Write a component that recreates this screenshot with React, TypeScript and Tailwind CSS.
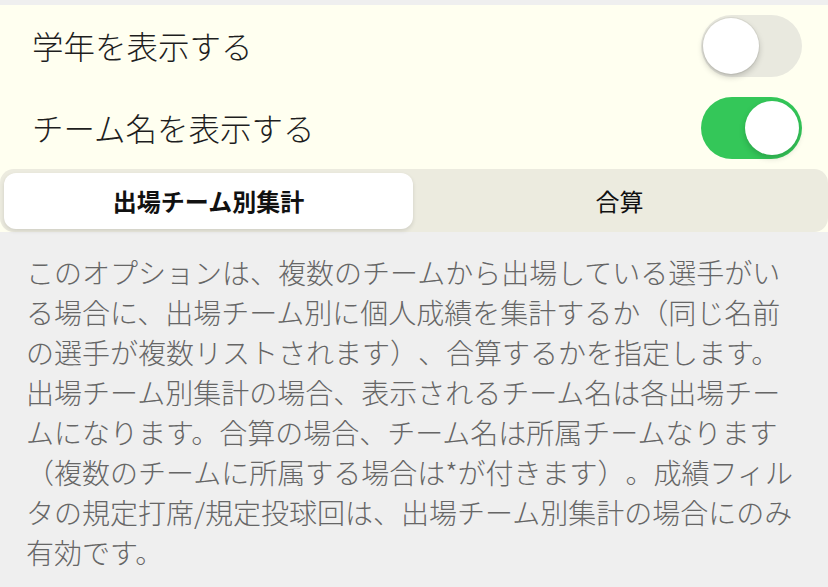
import React from "react";

const font = "font-['Noto_Sans_CJK_JP','Noto_Sans',sans-serif]";

function Toggle({ on }: { on: boolean }) {
  return on ? (
    <div className="relative h-[62px] w-[101px] rounded-full bg-[#34c759]">
      <div className="absolute right-[3px] top-[4px] h-[54px] w-[54px] rounded-full bg-white shadow-[0_3px_6px_rgba(0,0,0,0.18)]" />
    </div>
  ) : (
    <div className="relative h-[62px] w-[101px] rounded-full bg-[#e9e9df]">
      <div className="absolute left-[2px] top-[3px] h-[56px] w-[56px] rounded-full bg-white shadow-[0_3px_6px_rgba(0,0,0,0.2),0_0_0_1px_rgba(0,0,0,0.05)]" />
    </div>
  );
}

function Row({ label, on }: { label: string; on: boolean }) {
  return (
    <div className="flex h-[82px] items-center justify-between pl-8 pr-[26px]">
      <span className="text-[31.5px] font-light leading-none text-[#1e1e1e]">{label}</span>
      <Toggle on={on} />
    </div>
  );
}

const lines = [
  "このオプションは、複数のチームから出場している選手がい",
  "る場合に、出場チーム別に個人成績を集計するか（同じ名前",
  "の選手が複数リストされます）、合算するかを指定します。",
  "出場チーム別集計の場合、表示されるチーム名は各出場チー",
  "ムになります。合算の場合、チーム名は所属チームなります",
  "（複数のチームに所属する場合は*が付きます）。成績フィル",
  "タの規定打席/規定投球回は、出場チーム別集計の場合にのみ",
  "有効です。",
];

export default function App() {
  return (
    <div className={`${font} h-[587px] w-[828px] overflow-hidden bg-[#efefef] [text-spacing-trim:space-all]`}>
      <div className="h-[5px] bg-[#efefef]" />
      <div className="bg-[#fffff0]">
        <Row label="学年を表示する" on={false} />
        <Row label="チーム名を表示する" on={true} />
        <div className="flex h-[63px] gap-[2px] rounded-[14px] bg-[#ecebdf] px-[4px] pb-[3px] pt-[4px]">
          <div className="flex flex-1 items-center justify-center rounded-[12px] bg-white shadow-[0_2px_4px_rgba(0,0,0,0.12)]">
            <span className="text-[24px] font-bold leading-none text-[#111]">出場チーム別集計</span>
          </div>
          <div className="flex flex-1 items-center justify-center">
            <span className="text-[24px] leading-none text-[#111]">合算</span>
          </div>
        </div>
      </div>
      <div className="px-[26px] pt-[20px] text-[28px] font-light leading-[40px] text-[#666] whitespace-nowrap">
        {lines.map((l, i) => (
          <div key={i}>{l}</div>
        ))}
      </div>
    </div>
  );
}
